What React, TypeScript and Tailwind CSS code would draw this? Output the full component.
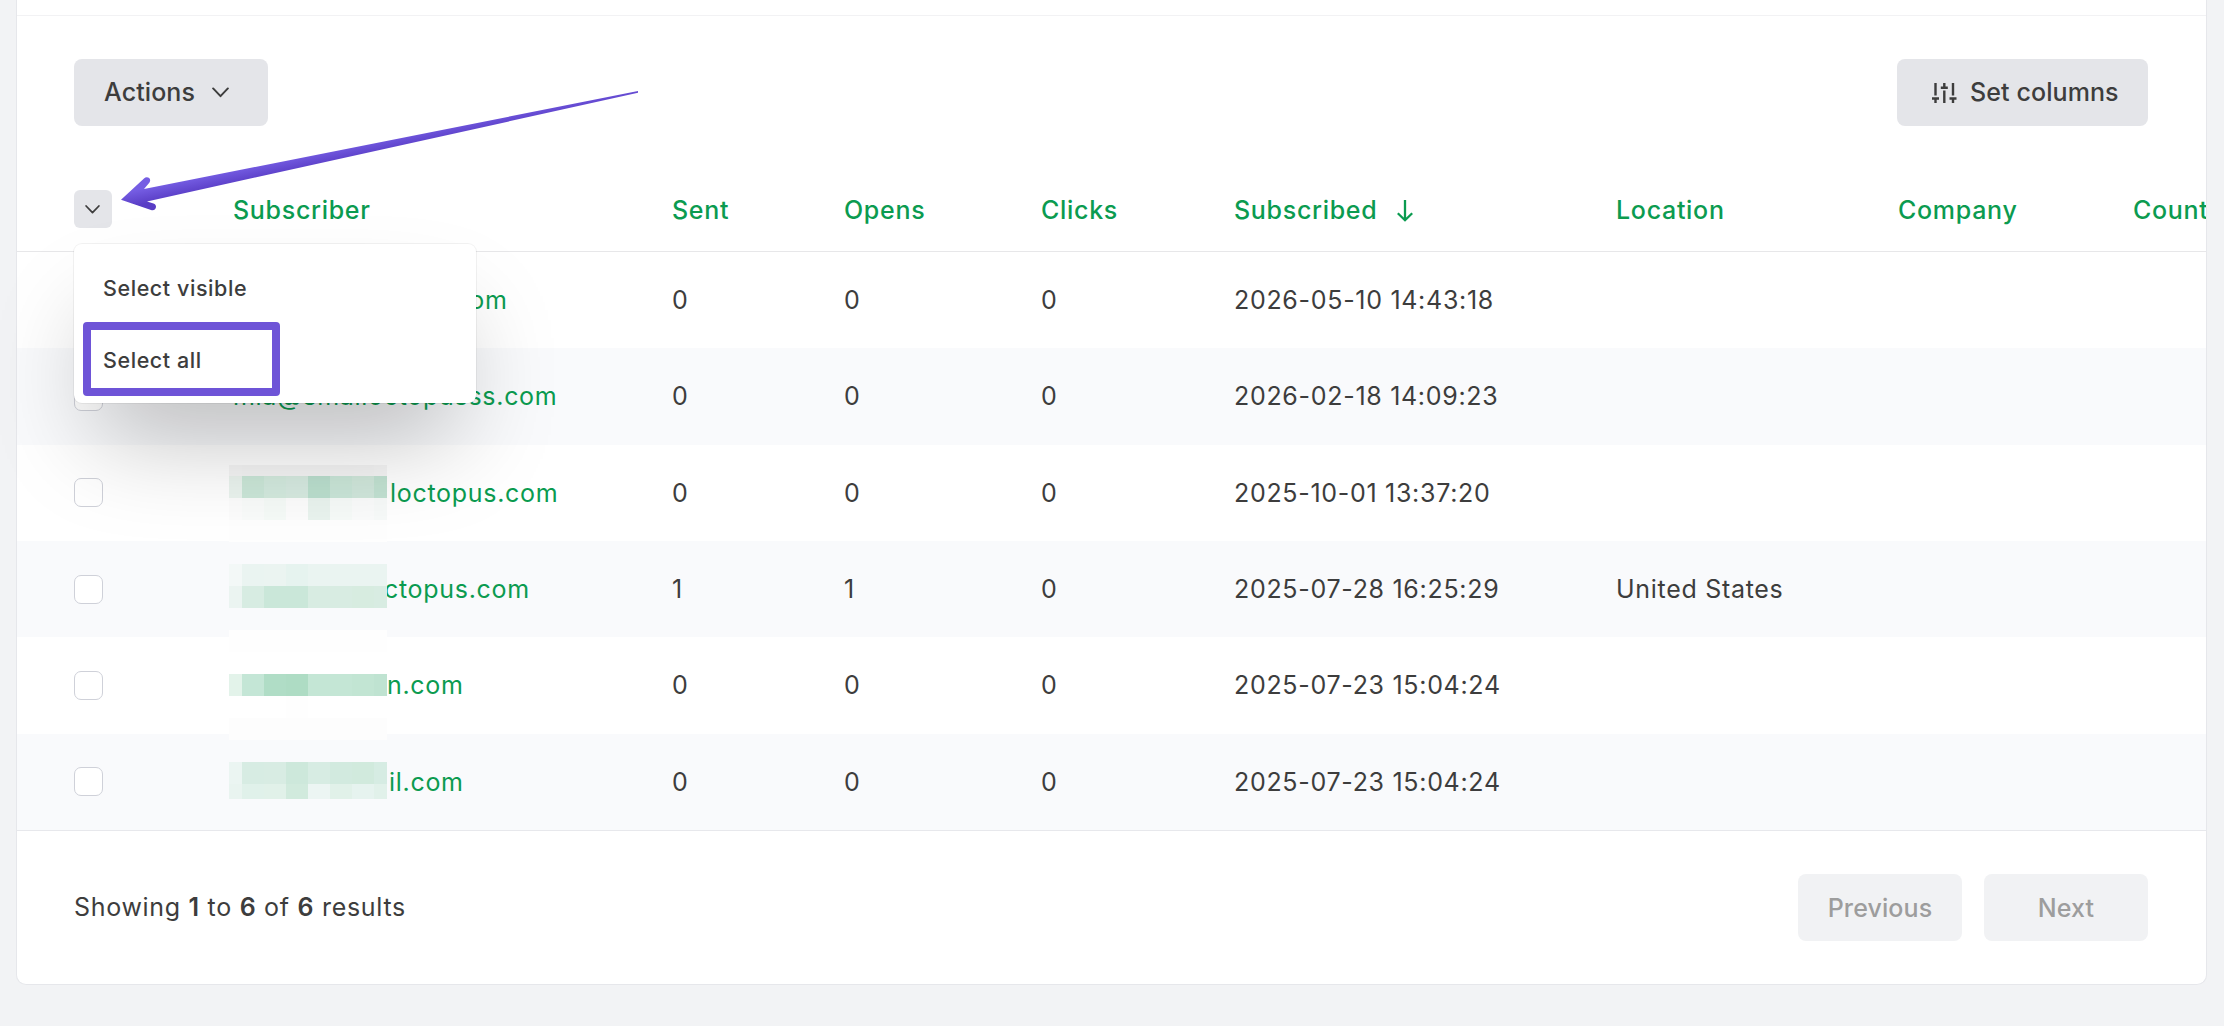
import { clsx } from "clsx";

type Subscriber = {
  email: string;
  sent: number;
  opens: number;
  clicks: number;
  subscribed: string;
  location?: string;
};

const subscribers: Subscriber[] = [
  { email: "mia@octopus.com", sent: 0, opens: 0, clicks: 0, subscribed: "2026-05-10 14:43:18" },
  { email: "mia@emailoctopusss.com", sent: 0, opens: 0, clicks: 0, subscribed: "2026-02-18 14:09:23" },
  { email: "loctopus.com", sent: 0, opens: 0, clicks: 0, subscribed: "2025-10-01 13:37:20" },
  { email: "ctopus.com", sent: 1, opens: 1, clicks: 0, subscribed: "2025-07-28 16:25:29", location: "United States" },
  { email: "n.com", sent: 0, opens: 0, clicks: 0, subscribed: "2025-07-23 15:04:24" },
  { email: "il.com", sent: 0, opens: 0, clicks: 0, subscribed: "2025-07-23 15:04:24" },
];

// left offset of each visible address inside its cell
const emailIndent = ["pl-[44px]", "pl-0", "pl-[157px]", "pl-[151px]", "pl-[154px]", "pl-[156px]"];

// redaction mosaic, one entry per 22px band
const mosaic: string[][] = [
  ["#f6f6f6", "#f5f5f5", "#f5f5f5", "#f5f5f5", "#f5f5f5", "#f5f5f5", "#f5f5f5", "#f6f6f6"],
  ["#ebf4ef", "#cbe7d8", "#d3eade", "#d6eae0", "#bbdfce", "#cae6d8", "#d0e7db", "#c2e2d2"],
  ["#fcfcfc", "#f9fbfa", "#f5faf7", "#fcfcfc", "#e9f3ee", "#f6faf8", "#fafbfb", "#f7faf9"],
  ["#fefefe", "#fefefe", "#fefefe", "#fefefe", "#fefefe", "#fefefe", "#fefefe", "#fefefe"],
  ["#f9fafc", "#f9fafc", "#f9fafc", "#f9fafc", "#f9fafc", "#f9fafc", "#f9fafc", "#f9fafc"],
  ["#f3f8f7", "#eaf4f1", "#ebf4f1", "#e6f3ef", "#eaf4f1", "#eaf4f1", "#eaf4f1", "#eaf4f1"],
  ["#ebf4f1", "#d7ece2", "#cae7d9", "#cae7d9", "#d8ece2", "#d8ece2", "#d7ece0", "#d8ece2"],
  ["#f9fafc", "#f9fafc", "#f9fafc", "#f9fafc", "#f9fafc", "#f9fafc", "#f9fafc", "#f9fafc"],
  ["#fefefe", "#fefefe", "#fefefe", "#fefefe", "#fefefe", "#fefefe", "#fefefe", "#fefefe"],
  ["#ffffff", "#ffffff", "#ffffff", "#ffffff", "#ffffff", "#ffffff", "#ffffff", "#ffffff"],
  ["#e3f3ea", "#c4e6d6", "#b0ddc6", "#aedcc4", "#c4e6d5", "#c4e6d5", "#c2e5d3", "#bfe3d1"],
  ["#ffffff", "#ffffff", "#ffffff", "#fefefe", "#ffffff", "#ffffff", "#ffffff", "#ffffff"],
  ["#fdfdfd", "#fdfdfd", "#fdfdfd", "#fdfdfd", "#fdfdfd", "#fdfdfd", "#fdfdfd", "#fdfdfd"],
  ["#f9fafc", "#f9fafc", "#f9fafc", "#f9fafc", "#f9fafc", "#f9fafc", "#f9fafc", "#f9fafc"],
  ["#ebf5f2", "#d7ece3", "#d8ece3", "#cde8db", "#d7ece3", "#d2eadf", "#d1eadd", "#d6ece3"],
  ["#e9f4f0", "#e0f1ea", "#e1f1e9", "#d1eadd", "#ecf5f3", "#e1f1e9", "#e6f3ef", "#e1f1ea"],
];

const columnWidths = [216, 439, 172, 197, 193, 382, 282, 235, 200];

function ChevronDown({ className }: { className?: string }) {
  return (
    <svg viewBox="0 0 18 11" fill="none" className={className}>
      <path d="M1.2 1.2 9 9.4l7.8-8.2" stroke="currentColor" strokeWidth="2.1" strokeLinecap="round" strokeLinejoin="round" />
    </svg>
  );
}

function ArrowDown() {
  return (
    <svg viewBox="0 0 16 22" fill="none" className="h-[22px] w-4">
      <path d="M8 0v20.500M.8 13.200l7.200 7 7.200-7" stroke="currentColor" strokeWidth="2.3" />
    </svg>
  );
}

function SlidersIcon() {
  return (
    <svg viewBox="0 0 25 20" fill="none" className="h-5 w-[25px]">
      <path
        d="M3.500 0v12.500M0 15.500h7M3.500 15.500V20M12.300 0v4.500M8.800 4.700h7M12.300 7.500V20M21 0v12.500M17.500 15.500h7M21 15.500V20"
        stroke="currentColor"
        strokeWidth="2.4"
      />
    </svg>
  );
}

function Mosaic() {
  return (
    <div className="absolute left-[212px] top-[465px] h-[334px] w-[158px] overflow-hidden">
      {mosaic.map((band, y) => (
        <div key={y} className={clsx("flex overflow-hidden", y === 0 ? "h-[11px]" : "h-[22px]")}>
          {band.map((color, x) => (
            <div
              key={x}
              className={clsx("h-full", x === 0 || x === 7 ? "w-[13px]" : "w-[22px]")}
              style={{ backgroundColor: color }}
            />
          ))}
        </div>
      ))}
    </div>
  );
}

function SelectMenu() {
  return (
    <div className="absolute left-[57px] top-[244px] h-[159px] w-[402px] rounded-lg bg-white text-[21.5px] font-medium tracking-[0.57px] shadow-[0_0_0_1px_rgba(0,0,0,0.05),0_54px_100px_-22px_rgba(0,0,0,0.27)]">
      <div className="flex flex-col gap-[45px] px-[29px] pt-[31px] leading-[27px]">
        <button className="text-left">Select visible</button>
        <button className="text-left">Select all</button>
      </div>
      <div className="absolute left-[9px] top-[78px] h-[74px] w-[197px] rounded-[4px] border-8 border-[#6e54d7]" />
    </div>
  );
}

function Pointer() {
  return (
    <svg viewBox="0 0 560 140" className="absolute left-[83px] top-[80px] h-[140px] w-[560px]">
      <defs>
        <linearGradient id="pointer" gradientUnits="userSpaceOnUse" x1="278.400" y1="58.500" x2="281.600" y2="73.500">
          <stop offset="0" stopColor="#755de3" />
          <stop offset="1" stopColor="#593dc5" />
        </linearGradient>
      </defs>
      <path
        d="M538 11L44 109l5.500-6.500c2.500-4-2.500-7-5.500-4L21 119.700 51 130c5 1.500 7-5 2.500-6.500l-6.500-2L538 12.800z"
        fill="url(#pointer)"
      />
    </svg>
  );
}

export default function App() {
  return (
    <div className="h-[1026px] w-[2224px] overflow-hidden bg-[#f2f3f5] pl-4 font-['Inter',sans-serif] text-[#3d3d3d]">
      <div className="relative h-[985px] w-[2191px] rounded-b-[10px] border border-t-0 border-[#e6e7eb] bg-white">
        <div className="h-4 border-b border-[#f2f2f4]" />

        <div className="flex items-start justify-between pl-[57px] pr-[58px] pt-[43px]">
          <button className="flex h-[67px] w-[194px] items-center gap-[17px] rounded-lg bg-[#e4e5e9] pl-[30px] text-[25px] font-medium tracking-[0.1px]">
            Actions
            <ChevronDown className="h-[11px] w-[17px]" />
          </button>
          <button className="flex h-[67px] w-[251px] items-center gap-[13px] rounded-lg bg-[#e4e5e9] pl-[35px] text-[25px] font-medium tracking-[0.1px]">
            <SlidersIcon />
            Set columns
          </button>
        </div>

        <div className="mt-[46px] overflow-hidden">
          <table className="w-[2316px] table-fixed border-separate border-spacing-0 text-left text-[25px] tracking-[0.7px]">
            <colgroup>
              {columnWidths.map((width, i) => (
                <col key={i} style={{ width }} />
              ))}
            </colgroup>
            <thead>
              <tr className="h-[80px] text-[#0b9b50] [&>th]:border-b [&>th]:border-[#e7e7e9] [&>th]:font-medium [&>th+th]:pb-0.5">
                <th className="pl-[57px] align-top">
                  <button className="mt-[18px] flex size-[38px] items-center justify-center rounded-md bg-[#e4e5e9] pr-px text-[#3d3d3d]">
                    <ChevronDown className="h-[9px] w-[15px]" />
                  </button>
                </th>
                <th>Subscriber</th>
                <th>Sent</th>
                <th>Opens</th>
                <th>Clicks</th>
                <th>
                  <span className="flex items-center gap-5">
                    Subscribed
                    <ArrowDown />
                  </span>
                </th>
                <th>Location</th>
                <th>Company</th>
                <th>Country</th>
              </tr>
            </thead>
            <tbody>
              {subscribers.map((row, i) => (
                <tr key={i} className="h-[96.33px] even:bg-[#f9fafc] [&>td+td]:pt-px">
                  <td className="pl-[57px]">
                    <div className="size-[29px] rounded-[7px] border border-[#cfd1d9] bg-white" />
                  </td>
                  <td className={clsx("text-[#0b9b50]", emailIndent[i])}>{row.email}</td>
                  <td>{row.sent}</td>
                  <td>{row.opens}</td>
                  <td>{row.clicks}</td>
                  <td>{row.subscribed}</td>
                  <td>{row.location}</td>
                  <td />
                  <td />
                </tr>
              ))}
            </tbody>
          </table>
        </div>

        <div className="flex items-start justify-between border-t border-[#e7e8ec] pl-[57px] pr-[58px] pt-[43px]">
          <p className="pt-[17px] text-[25px] leading-8 tracking-[0.7px]">
            Showing <span className="font-semibold">1</span> to <span className="font-semibold">6</span> of{" "}
            <span className="font-semibold">6</span> results
          </p>
          <div className="flex gap-[22px] text-[25px] font-medium tracking-[0.1px] text-[#9d9d9d]">
            <button className="h-[67px] w-[164px] rounded-lg bg-[#f1f2f4] pt-[3px]">Previous</button>
            <button className="h-[67px] w-[164px] rounded-lg bg-[#f1f2f4] pt-[3px]">Next</button>
          </div>
        </div>

        <Mosaic />
        <SelectMenu />
        <Pointer />
      </div>
    </div>
  );
}
